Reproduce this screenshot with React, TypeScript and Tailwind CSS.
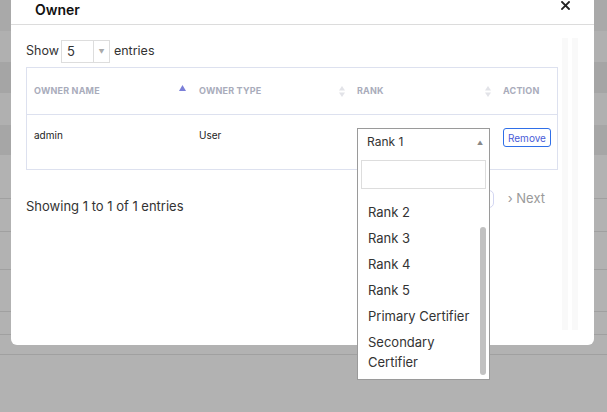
import React from 'react';

const bgRows = [
  { h: 31, c: 'bg-[#a9a9a9]' },
  { h: 31, c: 'bg-[#b0b0b0]' },
  { h: 31, c: 'bg-[#a5a5a5]' },
  { h: 32, c: 'bg-[#b0b0b0]' },
  { h: 30, c: 'bg-[#a6a6a6]' },
  { h: 44, c: 'bg-[#b2b2b2] border-b border-[#a0a0a0]' },
  { h: 33, c: 'bg-[#b2b2b2] border-b border-[#a0a0a0]' },
  { h: 38, c: 'bg-[#b2b2b2] border-b border-[#a0a0a0]' },
  { h: 42, c: 'bg-[#b2b2b2] border-b border-[#a0a0a0]' },
  { h: 23, c: 'bg-[#b2b2b2] border-b border-[#a0a0a0]' },
  { h: 20, c: 'bg-[#b2b2b2] border-b border-[#a0a0a0]' },
];

const options = ['Rank 2', 'Rank 3', 'Rank 4', 'Rank 5', 'Primary Certifier', 'Secondary Certifier'];

function SortBoth() {
  return (
    <svg width="6" height="11" viewBox="0 0 6 11" className="shrink-0">
      <path d="M3 0 L6 4.5 L0 4.5 Z" fill="#e2e3e8" />
      <path d="M3 11 L6 6.5 L0 6.5 Z" fill="#e2e3e8" />
    </svg>
  );
}

function SortAsc() {
  return (
    <svg width="7" height="6" viewBox="0 0 7 6" className="shrink-0 -mt-[6px]">
      <path d="M3.5 0 L7 6 L0 6 Z" fill="#7b7fd8" />
    </svg>
  );
}

function CloseIcon() {
  return (
    <svg width="9" height="9" viewBox="0 0 9 9" className="mt-[1px]" aria-label="Close">
      <path d="M1 1 L8 8 M8 1 L1 8" stroke="#222" strokeWidth="1.8" strokeLinecap="square" />
    </svg>
  );
}

export default function App() {
  return (
    <div className="relative w-[607px] h-[412px] overflow-hidden bg-[#b2b2b2] font-['Inter',sans-serif]">
      {/* page behind overlay */}
      <div className="flex flex-col">
        {bgRows.map((r, i) => (
          <div key={i} className={r.c} style={{ height: r.h }} />
        ))}
      </div>

      {/* modal */}
      <div className="absolute left-[11px] top-0 w-[583px] h-[345px] bg-white rounded-b-[6px] flex flex-col">
        <div className="h-[25px] border-b border-[#dcdcdc] flex items-start justify-between pl-[24px] pr-[24px]">
          <h2 className="text-[14px] leading-[20px] font-semibold text-[#111]">Owner</h2>
          <CloseIcon />
        </div>

        <div className="flex pl-[15px] pr-[16px]">
          <div className="w-[532px] flex flex-col">
            {/* show entries */}
            <div className="flex items-center h-[23px] mt-[15px] text-[12.5px] text-[#333]">
              <span>Show</span>
              <div className="ml-[2px] w-[49px] h-[23px] border border-[#dddddd] flex">
                <span className="w-[31px] pl-[5px] leading-[20px] text-[13px]">5</span>
                <span className="flex-1 border-l border-[#dddddd] flex items-center justify-center text-[6px] text-[#aaa]">▼</span>
              </div>
              <span className="ml-[4px]">entries</span>
            </div>

            {/* table */}
            <div className="mt-[4px] border border-[#dde1ef]">
              <div className="h-[47px] border-b border-[#dde1ef] flex items-center text-[9px] font-bold text-[#a9acbb] tracking-[0.2px]">
                <div className="w-[164px] pl-[7px] pr-[5px] flex items-center justify-between">
                  <span>OWNER NAME</span>
                  <SortAsc />
                </div>
                <div className="w-[158px] pl-[8px] pr-[4px] flex items-center justify-between">
                  <span>OWNER TYPE</span>
                  <SortBoth />
                </div>
                <div className="w-[146px] pl-[8px] pr-[4px] flex items-center justify-between">
                  <span>RANK</span>
                  <SortBoth />
                </div>
                <div className="flex-1 pl-[8px]">ACTION</div>
              </div>
              <div className="h-[54px] flex items-start text-[10px] text-[#222]">
                <div className="w-[164px] pl-[7px] pt-[13px]">admin</div>
                <div className="w-[158px] pl-[8px] pt-[13px]">User</div>
                <div className="w-[146px] pl-[8px] pt-[13px]">
                  <div className="relative w-[133px]">
                    <div className="h-[28px] border border-[#9a9a9a] border-b-0 flex items-center justify-between pl-[9px] pr-[6px] text-[12px] text-[#333] bg-white shadow-[0_3px_3px_-2px_rgba(0,0,0,0.06)]">
                      <span className="-mt-[1px]">Rank 1</span>
                      <span className="text-[6px] text-[#888]">▲</span>
                    </div>
                    <div className="absolute z-10 left-0 top-full w-[133px] h-[224px] bg-white border border-t-0 border-[#9a9a9a] flex flex-col">
                      <div className="mx-[3px] mt-[4px] h-[29px] border border-[#dddddd]" />
                      <div className="relative flex-1 pl-[10px] pr-[14px] pt-[13px] text-[13px] text-[#333]">
                        {options.map(o => (
                          <div key={o} className="leading-[20px] pb-[6px]">{o}</div>
                        ))}
                        <div className="absolute right-[3px] top-[38px] w-[6px] h-[148px] rounded-[3px] bg-[#c1c1c1]" />
                      </div>
                    </div>
                  </div>
                </div>
                <div className="flex-1 pl-[8px] pt-[13px]">
                  <button className="h-[19px] px-[4px] border border-[#2f6fe8] rounded-[3px] text-[10px] leading-[16px] text-[#4a5bd8] bg-white">Remove</button>
                </div>
              </div>
            </div>

            {/* footer */}
            <div className="flex items-start justify-between mt-[19px]">
              <span className="mt-[9px] text-[13px] leading-[16px] text-[#333]">Showing 1 to 1 of 1 entries</span>
              <div className="flex items-center h-[20px] mr-[13px]">
                <div className="w-[20px] h-[18px] rounded-[5px] border border-[#d3d6f2]" />
                <span className="ml-[14px] text-[13px] text-[#9a9a9a]">› Next</span>
              </div>
            </div>
          </div>

          {/* inner scroll track */}
          <div className="ml-[4px] mt-[13px] h-[292px] w-[16px] flex gap-[4px]">
            <div className="w-[6px] h-full bg-[#f9f9f9]" />
            <div className="w-[6px] h-full bg-[#f9f9f9]" />
          </div>
        </div>
      </div>
    </div>
  );
}
